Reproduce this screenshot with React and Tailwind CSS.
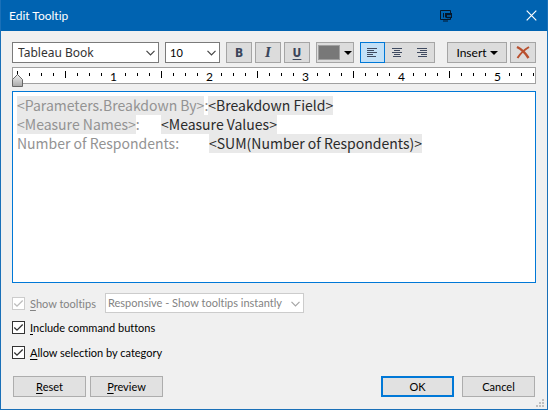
import { useState } from 'react';

const TICKS = Array.from({ length: 44 }, (_, i) => i);

function Chevron({ className }) {
  return (
    <svg viewBox="0 0 9 6" className={`pointer-events-none absolute h-[6px] w-[9px] ${className}`} fill="none" stroke="currentColor" strokeWidth="1.2" aria-hidden="true">
      <path d="M0.5 0.8 L4.5 4.8 L8.5 0.8" />
    </svg>
  );
}

function Caret() {
  return (
    <svg viewBox="0 0 8 4" className="h-[4px] w-[8px]" aria-hidden="true">
      <path d="M0 0h8L4 4z" fill="#000" />
    </svg>
  );
}

function ToolButton({ label, className = 'w-[26px] border', children }) {
  return (
    <button type="button" aria-label={label} className={`flex h-[21px] shrink-0 items-center justify-center border-[#a5a5a5] bg-[#dcdcdc] ${className}`}>
      {children}
    </button>
  );
}

function AlignIcon({ rows }) {
  return (
    <svg viewBox="0 0 11 9" className="h-[9px] w-[11px]" shapeRendering="crispEdges" aria-hidden="true">
      {rows.map(([x, w], i) => (
        <rect key={i} x={x} y={i * 2} width={w} height="1" fill="#3f4a60" />
      ))}
    </svg>
  );
}

function Ruler() {
  return (
    <div className="relative mt-[4px]">
      <div className="flex h-[17px] overflow-hidden border border-[#a0a0a0] bg-white pl-[4px]">
        {TICKS.map((i) => (
          <div key={i} className="h-full w-[12px] shrink-0">
            <div className="flex h-full w-px items-center justify-center">
              {i > 0 && i % 8 === 0 ? (
                <span className="pt-[2px] text-[12px] leading-none text-black">{i / 8}</span>
              ) : (
                <span className={`mb-[2px] w-px shrink-0 bg-black ${i % 4 === 0 ? 'h-[7px]' : 'h-[3px]'}`} />
              )}
            </div>
          </div>
        ))}
      </div>
      <svg viewBox="0 0 11 13" className="absolute top-[7px] left-0 h-[13px] w-[11px]" aria-hidden="true">
        <defs>
          <linearGradient id="thumb" x1="0" y1="0" x2="0" y2="1">
            <stop offset="0" stopColor="#f0f0f0" />
            <stop offset="1" stopColor="#a8a8a8" />
          </linearGradient>
        </defs>
        <path d="M0.5 12.5V5.5L5.5 0.5L10.5 5.5V12.5z" fill="url(#thumb)" stroke="#666" />
      </svg>
    </div>
  );
}

function Check({ disabled = false, children }) {
  const [on, setOn] = useState(true);
  return (
    <label className={`flex items-center gap-[5px] ${disabled ? 'text-[#838383]' : 'text-black'}`}>
      <span className="relative h-[13px] w-[13px]">
        <input
          type="checkbox"
          checked={on}
          disabled={disabled}
          onChange={() => setOn(!on)}
          className={`block h-[13px] w-[13px] appearance-none border bg-white ${disabled ? 'border-[#cccccc]' : 'border-[#333333]'}`}
        />
        {on && (
          <svg viewBox="0 0 13 13" className={`pointer-events-none absolute inset-0 h-[13px] w-[13px] ${disabled ? 'text-[#bcbcbc]' : 'text-[#333333]'}`} fill="none" stroke="currentColor" strokeWidth="1.3" aria-hidden="true">
            <path d="M2.3 6.5L5 9.2L10.7 3.5" />
          </svg>
        )}
      </span>
      <span className="leading-[15px]">{children}</span>
    </label>
  );
}

function DialogButton({ primary = false, children }) {
  return (
    <button type="button" className={`h-[21px] w-[73px] bg-[#e1e1e1] leading-[15px] text-black ${primary ? 'border-2 border-[#0078d7]' : 'border border-[#adadad]'}`}>
      {children}
    </button>
  );
}

function Key({ children }) {
  return <span className="underline underline-offset-2">{children}</span>;
}

function Field({ children }) {
  return <span className="inline-block h-[19px] bg-[#e9e9e9] align-top">{children}</span>;
}

function Value({ children }) {
  return <span className="inline-block h-[19px] bg-[#e9e9e9] align-top text-[#2b2b2b]">{children}</span>;
}

export default function App() {
  return (
    <div className="flex min-h-screen flex-col border border-t-0 border-[#1a70b8] bg-[#f0f0f0] font-['Lato',sans-serif] text-[11px] [font-variant-ligatures:none]">
      <header className="flex h-[31px] shrink-0 items-center bg-[#0063b1] pr-[10px] pl-[8px] text-white">
        <h1 className="grow text-[12px] leading-[16px]">Edit Tooltip</h1>
        <svg viewBox="0 0 12 12" className="mr-[74px] h-[12px] w-[12px]" fill="none" stroke="#04172b" aria-hidden="true">
          <path d="M10.5 3V0.5H0.5V9.5H10.5V8M3 11H8M3.5 3V7.5M5.5 3V7.5" />
          <rect x="6.5" y="3.5" width="5" height="4" />
          <path d="M7 4.5h4M7 7.5h4" strokeWidth="1.5" />
        </svg>
        <button type="button" aria-label="Close">
          <svg viewBox="0 0 11 11" className="h-[11px] w-[11px]" stroke="#fff" strokeWidth="1.2" aria-hidden="true">
            <path d="M0.7 0.7L10.3 10.3M10.3 0.7L0.7 10.3" />
          </svg>
        </button>
      </header>

      <main className="flex grow flex-col px-[11px] pt-[11px]">
        <div className="flex items-center">
          <div className="relative w-[147px]">
            <select aria-label="Font" className="block h-[21px] w-full appearance-none border border-[#7a7a7a] bg-white pl-[5px] font-['Noto_Sans',sans-serif] text-[12px] leading-[19px] text-[#333]">
              <option>Tableau Book</option>
            </select>
            <Chevron className="top-[8px] right-[4px] text-[#444]" />
          </div>
          <div className="relative ml-[6px] w-[55px]">
            <select aria-label="Font size" className="block h-[21px] w-full appearance-none border border-[#7a7a7a] bg-white pl-[4px] text-[11px] leading-[19px] text-black">
              <option>10</option>
            </select>
            <Chevron className="top-[8px] right-[4px] text-[#444]" />
          </div>
          <div className="ml-[6px] flex gap-[3px] font-['DejaVu_Sans_Condensed',sans-serif] text-[12px] leading-[14px] font-bold text-[#3b465b]">
            <ToolButton label="Bold">B</ToolButton>
            <ToolButton label="Italic">
              <span className="font-['DejaVu_Serif',serif] italic">I</span>
            </ToolButton>
            <ToolButton label="Underline">
              <span className="underline underline-offset-2">U</span>
            </ToolButton>
          </div>
          <ToolButton label="Text color" className="ml-[6px] w-[38px] gap-[4px] border">
            <span className="h-[15px] w-[22px] border border-[#a0a0a0] bg-[#787878]" />
            <Caret />
          </ToolButton>
          <div className="ml-[6px] flex">
            <button type="button" aria-label="Align left" aria-pressed="true" className="flex h-[21px] w-[25px] items-center justify-center border border-[#0078d7] bg-[#c2e0f7]">
              <AlignIcon rows={[[0, 10], [0, 7], [0, 10], [0, 6], [0, 9]]} />
            </button>
            <ToolButton label="Align center" className="w-[25px] border-y">
              <AlignIcon rows={[[0, 10], [2, 6], [0, 10], [2, 6], [1, 8]]} />
            </ToolButton>
            <ToolButton label="Align right" className="w-[25px] border-y border-r">
              <AlignIcon rows={[[0, 10], [3, 7], [0, 10], [4, 6], [1, 9]]} />
            </ToolButton>
          </div>
          <ToolButton label="Insert" className="ml-auto w-[60px] gap-[3px] border">
            <span className="text-[12px] leading-[15px] text-black">Insert</span>
            <Caret />
          </ToolButton>
          <ToolButton label="Clear" className="ml-[3px] w-[26px] border">
            <svg viewBox="0 0 14 13" className="h-[13px] w-[14px]" fill="none" stroke="#b9502f" aria-hidden="true">
              <path d="M1 1C5 3 10 8 12.5 12" strokeWidth="2.4" />
              <path d="M13 1C8 4 4 8 1.5 12" strokeWidth="2" />
            </svg>
          </ToolButton>
        </div>

        <Ruler />

        <div
          role="textbox"
          aria-multiline="true"
          aria-label="Tooltip text"
          contentEditable
          suppressContentEditableWarning
          spellCheck={false}
          className="mt-[7px] min-h-[192px] grow overflow-hidden border border-[#0078d7] bg-white p-[4px] font-['Noto_Sans_CJK_SC',sans-serif] text-[14px] leading-[19px] whitespace-pre text-[#939393] [tab-size:48px]"
        >
          <div>
            <Field>{'<Parameters.Breakdown By>'}</Field>:
            <Value>{'<Breakdown Field>'}</Value>
          </div>
          <div>
            <Field>{'<Measure Names>'}</Field>:{'\t'}
            <Value>{'<Measure Values>'}</Value>
          </div>
          <div>
            Number of Respondents:{'\t'}
            <Value>{'<SUM(Number of Respondents)>'}</Value>
          </div>
        </div>

        <div className="mt-[10px] flex flex-col">
          <div className="flex h-[20px] items-center">
            <div className="w-[93px]">
              <Check disabled>
                <Key>S</Key>how tooltips
              </Check>
            </div>
            <div className="relative w-[199px]">
              <select disabled aria-label="Tooltip behavior" className="block h-[20px] w-full appearance-none border border-[#cccccc] bg-white pl-[2px] text-[11px] leading-[18px] text-[#838383] opacity-100">
                <option>Responsive - Show tooltips instantly</option>
              </select>
              <Chevron className="top-[8px] right-[4px] text-[#a5a5a5]" />
            </div>
          </div>
          <div className="mt-[7px] flex flex-col gap-[10px]">
            <Check>
              <Key>I</Key>nclude command buttons
            </Check>
            <Check>
              <Key>A</Key>llow selection by category
            </Check>
          </div>
        </div>
      </main>

      <footer className="relative mt-[16px] flex px-[12px] pb-[12px]">
        <div className="flex gap-[4px]">
          <DialogButton>
            <Key>R</Key>eset
          </DialogButton>
          <DialogButton>
            <Key>P</Key>review
          </DialogButton>
        </div>
        <div className="ml-auto flex gap-[8px]">
          <DialogButton primary>OK</DialogButton>
          <DialogButton>Cancel</DialogButton>
        </div>
        <svg viewBox="0 0 8 8" className="absolute right-[3px] bottom-[2px] h-[8px] w-[8px]" fill="#bfbfbf" shapeRendering="crispEdges" aria-hidden="true">
          <path d="M6 0h2v2H6zM3 3h2v2H3zM6 3h2v2H6zM0 6h2v2H0zM3 6h2v2H3zM6 6h2v2H6z" />
        </svg>
      </footer>
    </div>
  );
}
